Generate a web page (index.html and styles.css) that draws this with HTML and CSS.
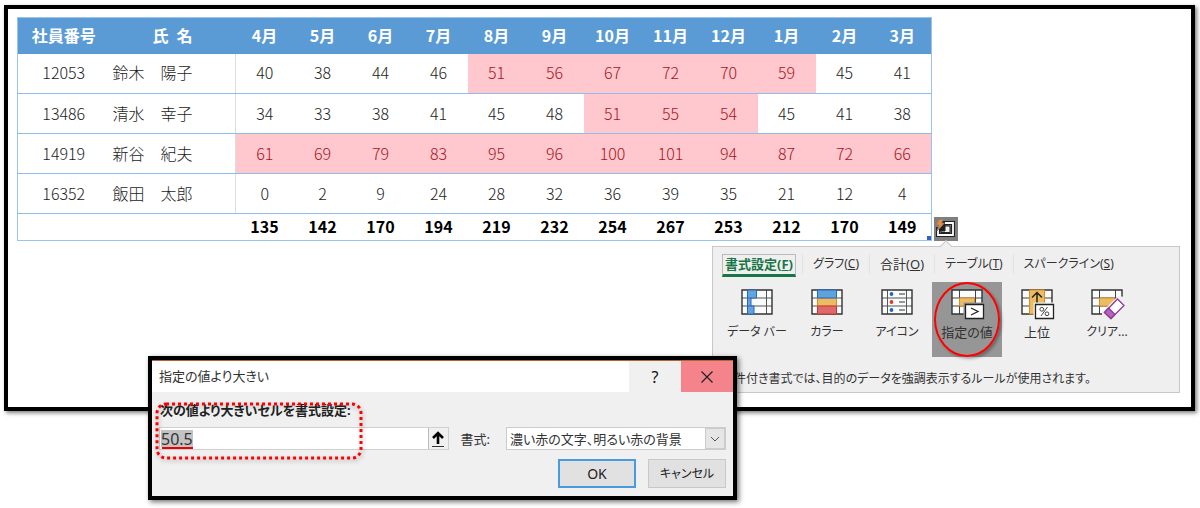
FILE: index.html
```html
<!DOCTYPE html>
<html lang="ja">
<head>
<meta charset="utf-8">
<title>条件付き書式</title>
<link rel="stylesheet" href="styles.css">
</head>
<body>
<main class="frame">
  <div class="sheet">
    <table class="grid">
      <colgroup><col class="col-id"><col class="col-name"><col span="12"></colgroup>
      <thead>
        <tr><th>社員番号</th><th>氏&ensp;名</th><th>4月</th><th>5月</th><th>6月</th><th>7月</th><th>8月</th><th>9月</th><th>10月</th><th>11月</th><th>12月</th><th>1月</th><th>2月</th><th>3月</th></tr>
      </thead>
      <tbody>
        <tr><td>12053</td><td class="name">鈴木　陽子</td><td>40</td><td>38</td><td>44</td><td>46</td><td class="hot">51</td><td class="hot">56</td><td class="hot">67</td><td class="hot">72</td><td class="hot">70</td><td class="hot">59</td><td>45</td><td>41</td></tr>
        <tr><td>13486</td><td class="name">清水　幸子</td><td>34</td><td>33</td><td>38</td><td>41</td><td>45</td><td>48</td><td class="hot">51</td><td class="hot">55</td><td class="hot">54</td><td>45</td><td>41</td><td>38</td></tr>
        <tr><td>14919</td><td class="name">新谷　紀夫</td><td class="hot">61</td><td class="hot">69</td><td class="hot">79</td><td class="hot">83</td><td class="hot">95</td><td class="hot">96</td><td class="hot">100</td><td class="hot">101</td><td class="hot">94</td><td class="hot">87</td><td class="hot">72</td><td class="hot">66</td></tr>
        <tr><td>16352</td><td class="name">飯田　太郎</td><td>0</td><td>2</td><td>9</td><td>24</td><td>28</td><td>32</td><td>36</td><td>39</td><td>35</td><td>21</td><td>12</td><td>4</td></tr>
      </tbody>
      <tfoot>
        <tr><td></td><td></td><td>135</td><td>142</td><td>170</td><td>194</td><td>219</td><td>232</td><td>254</td><td>267</td><td>253</td><td>212</td><td>170</td><td class="corner">149</td></tr>
      </tfoot>
    </table>
    <button class="quick" type="button" aria-label="クイック分析">
      <svg viewBox="0 0 24 24" width="24" height="24">
        <path d="M10 6h9v12H4v-6h5z" fill="none" stroke="#222" stroke-width="4"/>
        <path d="M11 6h8v12H4v-6" fill="none" stroke="#fff" stroke-width="1.800"/>
        <path d="M16 9h-5v5H7v1.500h9z" fill="#f4f4f4" stroke="#222" stroke-width="1"/>
        <path d="M5 2.500l4.500-.5-2 4h3l-7.500 8 2-6H2z" fill="#f08a35" stroke="#7f7f7f" stroke-width=".8"/>
      </svg>
    </button>
  </div>

  <section class="popup">
    <nav class="tabs">
      <button class="tab active" type="button">書式設定(<u>F</u>)</button>
      <button class="tab kana" type="button">グラフ(<u>C</u>)</button>
      <button class="tab" type="button">合計(<u>O</u>)</button>
      <button class="tab kana" type="button">テーブル(<u>T</u>)</button>
      <button class="tab kana" type="button">スパークライン(<u>S</u>)</button>
    </nav>
    <div class="tools">
      <button class="tool kana" type="button">
        <svg viewBox="0 0 36 34" width="36" height="34">
          <path d="M3 2h30v24H3z" fill="#fafcfc"/>
          <path d="M3 10h30M3 18h30M8.500 2v24M27.500 2v24" stroke="#555" fill="none"/>
          <path d="M3 2h30v24H3z" fill="none" stroke="#333" stroke-width="1.400"/>
          <path d="M8.500 2h9v8h-5.500v8h3v8H8.500z" fill="#62a5dc" stroke="#2867bd"/>
          <path d="M8.500 10h4M8.500 18h4" stroke="#2867bd"/>
        </svg>
        <span>データ バー</span>
      </button>
      <button class="tool kana" type="button">
        <svg viewBox="0 0 36 34" width="36" height="34">
          <path d="M3 2h30v24H3z" fill="#fafcfc"/>
          <path d="M3 10h30M3 18h30" stroke="#555"/>
          <path d="M3 2h30v24H3z" fill="none" stroke="#333" stroke-width="1.400"/>
          <path d="M8.500 10h19v8h-19z" fill="#ecbc62" stroke="#d98a28"/>
          <path d="M8.500 2h19v8h-19z" fill="#5fa3da" stroke="#2867bd"/>
          <path d="M8.500 18h19v8h-19z" fill="#dd6a6a" stroke="#cc3434"/>
        </svg>
        <span>カラー</span>
      </button>
      <button class="tool kana" type="button">
        <svg viewBox="0 0 36 34" width="36" height="34">
          <path d="M3 2h30v24H3z" fill="#fafcfc"/>
          <path d="M3 10h30M3 18h30M8.500 2v24M27.500 2v24" stroke="#555" fill="none"/>
          <path d="M3 2h30v24H3z" fill="none" stroke="#333" stroke-width="1.400"/>
          <path d="M20 6h6M20 14h6M20 22h6" stroke="#333" stroke-width="1.200"/>
          <circle cx="12.500" cy="6" r="1.900" fill="#1f66c0"/><circle cx="12.500" cy="14" r="1.900" fill="#dc3a3a"/><circle cx="12.500" cy="22" r="1.900" fill="#1f66c0"/>
        </svg>
        <span>アイコン</span>
      </button>
      <button class="tool selected" type="button">
        <svg viewBox="0 0 36 34" width="36" height="34">
          <path d="M3 2h30v24H3z" fill="#fafcfc"/>
          <path d="M3 10h30M3 18h30M10.500 2v24M26.500 2v24" stroke="#444" fill="none"/>
          <path d="M3 2h30v24H3z" fill="none" stroke="#333" stroke-width="1.400"/>
          <path d="M10.500 10h15v8h-15z" fill="#ecbc62" stroke="#d98a28"/>
          <path d="M14.500 14.500h22v18h-22z" fill="#969696"/>
          <path d="M16.500 16.500h18v14h-18z" fill="#fff" stroke="#222" stroke-width="1.300"/>
          <path d="M22 20l7 3.500-7 3.500" fill="none" stroke="#222" stroke-width="1.300"/>
        </svg>
        <span>指定の値</span>
      </button>
      <button class="tool" type="button">
        <svg viewBox="0 0 36 34" width="36" height="34">
          <path d="M3 2h30v24H3z" fill="#fafcfc"/>
          <path d="M3 10h30M3 18h30M10.500 2v24M25.500 2v24" stroke="#444" fill="none"/>
          <path d="M3 2h30v24H3z" fill="none" stroke="#333" stroke-width="1.400"/>
          <path d="M10.500 2h15v24h-15z" fill="#ecbc62" stroke="#d98a28"/>
          <path d="M18 16V5M13 9.500l5-5 5 5" fill="none" stroke="#222" stroke-width="1.500"/>
          <path d="M14.500 14.500h22v18h-22z" fill="#efefef"/>
          <path d="M16.500 16.500h18v14h-18z" fill="#fff" stroke="#222" stroke-width="1.300"/>
          <path d="M22 28l6.500-9" stroke="#444"/>
          <circle cx="22.800" cy="21.300" r="1.900" fill="none" stroke="#444"/><circle cx="28" cy="25.800" r="1.900" fill="none" stroke="#444"/>
        </svg>
        <span>上位</span>
      </button>
      <button class="tool kana" type="button">
        <svg viewBox="0 0 36 34" width="36" height="34">
          <path d="M3 2h30v24H3z" fill="#fafcfc"/>
          <path d="M3 10h30M3 18h30M10.500 2v24M26.500 2v24" stroke="#444" fill="none"/>
          <path d="M3 2h30v24H3z" fill="none" stroke="#333" stroke-width="1.400"/>
          <path d="M10.500 10h15v8h-15z" fill="#ecbc62" stroke="#d98a28"/>
          <path d="M36 9L29 8 13 24v9h23z" fill="#efefef"/>
          <path d="M28.500 11l6.500 6.500-13 13-6.500-6z" fill="#fff" stroke="#8e3a99" stroke-width="1.300"/>
          <path d="M19.500 20l6.500 6.500-4 4-6.500-6z" fill="#b565bb" stroke="#8e3a99" stroke-width="1.300"/>
        </svg>
        <span>クリア...</span>
      </button>
    </div>
    <p class="hint">条件付き書式では、目的のデータを強調表示するルールが使用されます。</p>
  </section>
</main>

<form class="dialog" role="dialog" aria-labelledby="dialog-title">
  <header class="titlebar">
    <h2 class="title" id="dialog-title">指定の値より大きい</h2>
    <button class="winbtn" type="button" aria-label="ヘルプ">?</button>
    <button class="winbtn close" type="button" aria-label="閉じる">
      <svg viewBox="0 0 12 12" width="12" height="12"><path d="M.5.5l11 11M11.500.5l-11 11" stroke="#222" stroke-width="1.200"/></svg>
    </button>
  </header>
  <div class="content">
    <label class="prompt" for="threshold">次の値より大きいセルを書式設定:</label>
    <div class="fields">
      <div class="ref">
        <input class="value" id="threshold" type="text" value="50.5">
        <button class="pick" type="button" aria-label="セル範囲の選択">
          <svg viewBox="0 0 16 18" width="16" height="18"><path d="M8 14V3M3 8l5-5 5 5" fill="none" stroke="#000" stroke-width="2.600"/><path d="M2 16.500h12" stroke="#333"/></svg>
        </button>
      </div>
      <label class="caption" for="style">書式:</label>
      <div class="combo">
        <select class="select" id="style"><option>濃い赤の文字、明るい赤の背景</option></select>
        <span class="chevron"><svg viewBox="0 0 10 6" width="10" height="6"><path d="M1 1l4 4 4-4" fill="none" stroke="#555"/></svg></span>
      </div>
    </div>
    <div class="actions">
      <button class="btn primary" type="button">OK</button>
      <button class="btn kana" type="button">キャンセル</button>
    </div>
  </div>
  <svg class="marker" viewBox="0 0 208 58" width="208" height="58">
    <rect x="2" y="2" width="204" height="54" rx="9" fill="none" stroke="#f00" stroke-width="3" stroke-dasharray="3 3"/>
  </svg>
</form>
</body>
</html>
```
FILE: styles.css
```css
* { box-sizing: border-box; }

body {
  position: relative;
  min-height: 100vh;
  margin: 0;
  padding: 5px 5px 0 4px;
  background: #fff;
  color: #333;
  font: 13px/18px "Noto Sans", "Noto Sans CJK JP", sans-serif;
}

button, input, select { font: inherit; color: inherit; margin: 0; padding: 0; border: 0; background: none; }

.frame {
  border: 4px solid #000;
  box-shadow: 2px 2px 4px rgba(0, 0, 0, .5);
  padding: 8px 11px 14px 9px;
}

.sheet { display: flex; align-items: flex-end; gap: 2px; }

.grid {
  flex: 0 1 915px;
  width: 915px;
  table-layout: fixed;
  border-collapse: collapse;
  border: 1px solid #9cc3e8;
  color: #1c1c1c;
  font-family: "Noto Sans CJK JP", sans-serif;
  font-size: 16px;
  line-height: 20px;
  text-align: center;
}
.col-id { width: 92px; }
.col-name { width: 126px; }
.grid th, .grid td { padding: 0 0 2px; }
.grid th { height: 36px; background: #5b9bd5; color: #fff; font-weight: 700; }
.grid tbody td { height: 40px; border-bottom: 1px solid #8fbdea; font-weight: 300; }
.grid tbody .name { padding-left: 3px; border-right: 1px solid #ddd; text-align: left; }
.grid tbody .hot { background: #ffc7ce; color: #a81420; }
.grid tfoot td { height: 27px; color: #000; font-weight: 700; }
.grid .corner { background: linear-gradient(#3b5fc0, #3b5fc0) right bottom / 4px 4px no-repeat; }

.quick { width: 24px; height: 24px; background: #7f7f7f; }
.quick svg { display: block; }

.popup {
  position: relative;
  width: 468px;
  margin: 5px 0 0 auto;
  padding: 7px 9px 3px;
  border: 1px solid #c8c8c8;
  background: #efefef;
  font-feature-settings: "palt";
}
.popup::before {
  content: "";
  position: absolute;
  top: -5px;
  left: 50%;
  width: 8px;
  height: 8px;
  border: 1px solid #c8c8c8;
  border-width: 1px 0 0 1px;
  background: #efefef;
  transform: translateX(-50%) rotate(45deg);
}

.kana { font-size: 12px; line-height: 20px; }

.tabs { display: flex; align-items: flex-start; }
.tab { padding: 0 10px; border-left: 1px solid #e2e2e2; font-feature-settings: inherit; line-height: 20px; white-space: nowrap; }
.tab.active {
  margin-right: 6px;
  padding: 0 2px;
  border: 1px solid #bbb;
  border-bottom: 3px solid #187546;
  color: #187546;
  font-weight: 700;
  line-height: 19px;
}

.tools { display: flex; margin-top: 5px; }
.tool {
  position: relative;
  display: flex;
  flex-direction: column;
  align-items: center;
  width: 70px;
  height: 75px;
  padding-top: 6px;
  font-feature-settings: inherit;
  line-height: 20px;
}
.tool.selected { background: #969696; }
.tool.selected::after {
  content: "";
  position: absolute;
  inset: 0 2px;
  border: 2px solid #f00;
  border-radius: 50%;
  box-shadow: 2px 2px 3px rgba(0, 0, 0, .3);
}
.hint { margin: 13px 0 1px; font-size: 12px; white-space: nowrap; }

.dialog {
  position: absolute;
  left: 148px;
  top: 356px;
  width: 589px;
  border: 4px solid #000;
  background: #f0f0f0;
  box-shadow: 2px 2px 5px rgba(0, 0, 0, .55);
  font-feature-settings: "palt";
}
.dialog button, .dialog select { font-feature-settings: inherit; }
.titlebar { display: flex; height: 32px; border-top: 1px solid #b8623a; background: #fff; }
.title { flex: 1; margin: 0; padding-left: 7px; font-size: 13px; font-weight: 400; line-height: 31px; }
.winbtn { width: 52px; background: #f0f0f0; color: #111; font-size: 16px; }
.winbtn.close { background: #f4838c; }

.content { padding: 9px 7px 8px; }
.prompt { display: block; padding-left: 1px; color: #222; font-weight: 700; }
.fields { display: flex; align-items: center; margin-top: 8px; }
.ref { display: flex; flex: 1; height: 23px; border: 1px solid #d0d0d0; background: #fff; }
.value {
  flex: 1;
  min-width: 0;
  padding-left: 1px;
  background: linear-gradient(#c3c3c3, #c3c3c3) 1px 2px / 32px 17px no-repeat,
              linear-gradient(#e00, #e00) 2px 100% / 31px 2px no-repeat;
  font-size: 16px;
}
.pick { width: 20px; border-left: 1px solid #bbb; background: #f0f0f0; }
.pick svg { display: block; margin: auto; }
.caption { padding: 0 16px 0 12px; }
.combo { position: relative; width: 220px; height: 23px; }
.select { width: 100%; height: 100%; padding-left: 3px; border: 1px solid #ccc; background: #fff; appearance: none; }
.chevron {
  position: absolute;
  inset: 1px 1px 1px auto;
  display: grid;
  place-items: center;
  width: 20px;
  border: 1px solid #ccc;
  background: #e6e6e6;
  pointer-events: none;
}
.actions { display: flex; justify-content: flex-end; gap: 12px; margin-top: 9px; }
.btn { width: 78px; height: 29px; border: 1px solid #c8c8c8; background: #e1e1e1; color: #222; }
.btn.primary { border: 2px solid #4a9ae0; font-size: 14px; }

.marker { position: absolute; left: 3px; top: 42px; filter: drop-shadow(1px 2px 2px rgba(0, 0, 0, .3)); pointer-events: none; }
```
